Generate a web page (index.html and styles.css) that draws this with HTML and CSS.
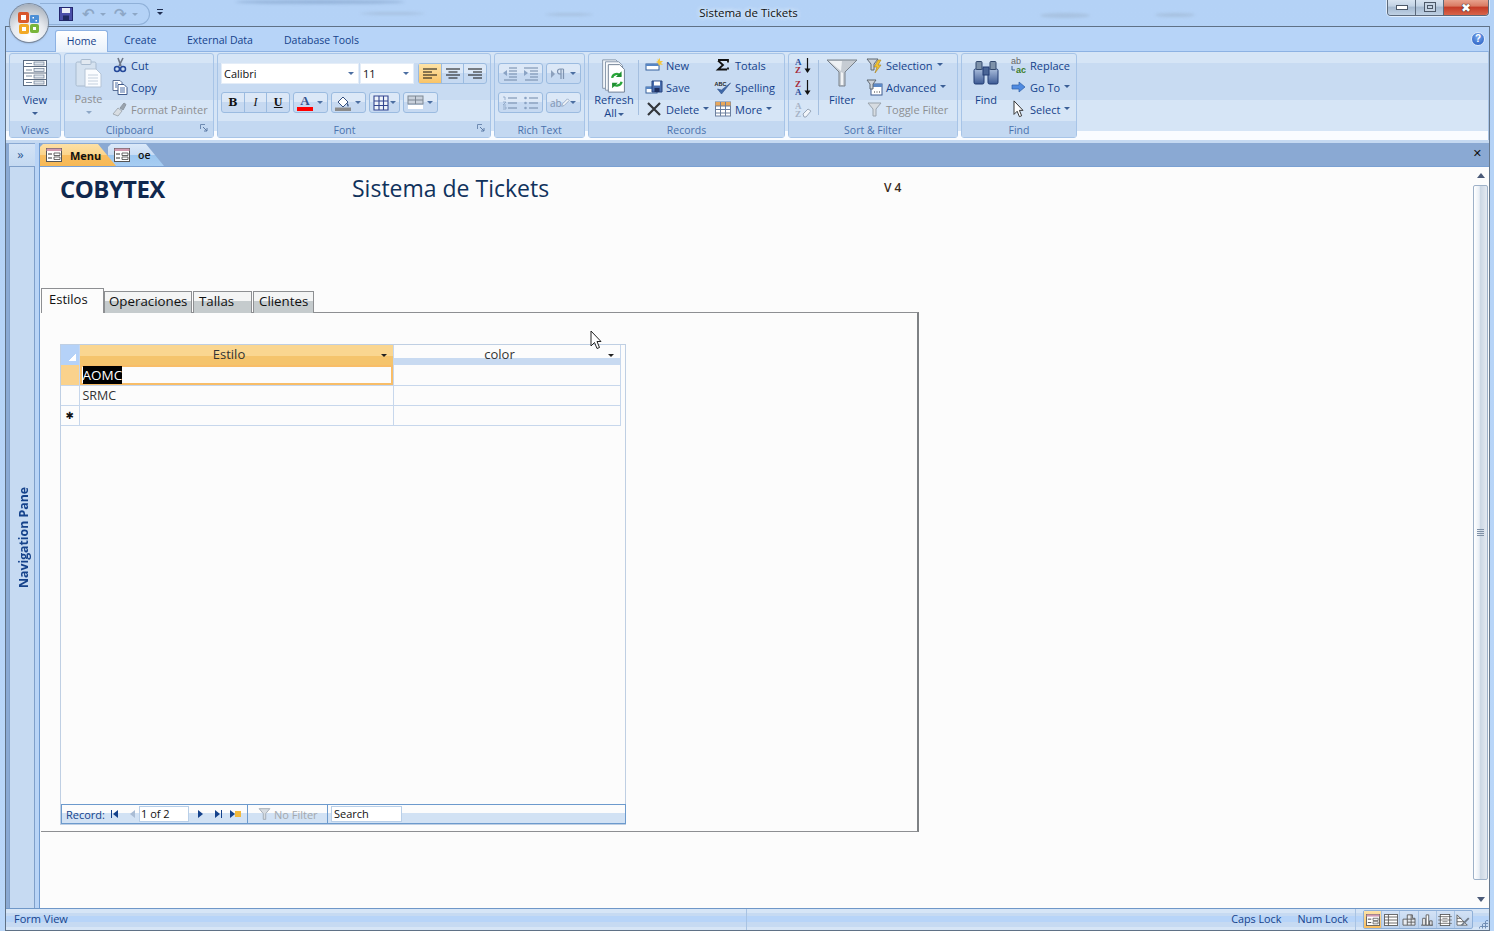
FILE: index.html
```html
<!DOCTYPE html>
<html lang="en">
<head>
    <meta charset="UTF-8">
    <title>Sistema de Tickets</title>
    <link rel="stylesheet" href="styles.css">
</head>
<body>

<svg class="defs" width="0" height="0">
    <defs>
        <linearGradient id="steel" x1="0" y1="0" x2="0" y2="1"><stop offset="0" stop-color="#a9bddc"/><stop offset="1" stop-color="#3d5a94"/></linearGradient>
        <symbol id="i-view" viewBox="0 0 26 28">
            <rect x="1.5" y="1.5" width="23" height="25" fill="#fff" stroke="#5a6a80"/>
            <path d="M1.5 7.5h23M1.5 14h23M1.5 20.500h23" stroke="#5a6a80"/>
            <path d="M4 4.500h6M4 11h6M4 17h6M4 23.500h6" stroke="#7b8ba0"/>
            <rect x="12" y="3" width="10" height="3" fill="#dfe6ee" stroke="#6a7a90" stroke-width=".7"/><rect x="12" y="9.500" width="10" height="3" fill="#dfe6ee" stroke="#6a7a90" stroke-width=".7"/><rect x="12" y="16" width="10" height="3" fill="#dfe6ee" stroke="#6a7a90" stroke-width=".7"/><rect x="12" y="22" width="10" height="3" fill="#dfe6ee" stroke="#6a7a90" stroke-width=".7"/>
        </symbol>
        <symbol id="i-paste" viewBox="0 0 28 30">
            <rect x="1" y="4" width="20" height="24" rx="1.500" fill="#d5e2f0" stroke="#a9bbcf"/>
            <rect x="6" y="1.500" width="10" height="5" rx="1" fill="#e2e9f1" stroke="#a9bbcf"/>
            <path d="M10 11h11l5 5v13H10z" fill="#fafcff" stroke="#b4c4d6"/>
            <path d="M13 17h10M13 20h10M13 23h10M13 26h10" stroke="#c4d0de"/>
        </symbol>
        <symbol id="i-cut" viewBox="0 0 16 16">
            <path d="M6 1l3 8M11 1L7 9" stroke="#6d7688" stroke-width="1.600" fill="none"/>
            <circle cx="5" cy="12" r="2.500" fill="none" stroke="#24489a" stroke-width="1.500"/><circle cx="11" cy="12" r="2.500" fill="none" stroke="#24489a" stroke-width="1.500"/>
        </symbol>
        <symbol id="i-copy" viewBox="0 0 16 16">
            <path d="M1 1.500h7l2 2v8H1z" fill="#fff" stroke="#5a6f96"/><path d="M6 5.500h6l3 3v7H6z" fill="#fff" stroke="#3f5a8c"/>
            <path d="M3 4h3M3 6h2M3 8h2M8 9h5M8 11h5M8 13h5" stroke="#4c6ea8"/>
        </symbol>
        <symbol id="i-painter" viewBox="0 0 16 16">
            <path d="M1 13l5-6 4 3-4 5z" fill="#d8dde2" stroke="#a4adb6"/><path d="M8 7l4-5 2 1.500-3 5.500z" fill="#9aa3ad" stroke="#8e98a2"/>
        </symbol>
        <symbol id="i-launcher" viewBox="0 0 9 9">
            <path d="M.5 5V.5H5" fill="none" stroke="#6e8bb2"/><path d="M3 3l4 4M7 4v3H4" fill="none" stroke="#5d7ba5"/>
        </symbol>
        <symbol id="i-left" viewBox="0 0 16 14"><path d="M1 2h14M1 5h9M1 8h14M1 11h9" stroke="#111" stroke-width="1.200"/></symbol>
        <symbol id="i-center" viewBox="0 0 16 14"><path d="M1 2h14M3.500 5h9M1 8h14M3.500 11h9" stroke="#111" stroke-width="1.200"/></symbol>
        <symbol id="i-right" viewBox="0 0 16 14"><path d="M1 2h14M6 5h9M1 8h14M6 11h9" stroke="#111" stroke-width="1.200"/></symbol>
        <symbol id="i-grid" viewBox="0 0 16 16"><path d="M1 1h14v14H1zM1 6h14M1 10.500h14M6 1v14M10.500 1v14" fill="#eef3fa" stroke="#33458f" stroke-width="1.100"/></symbol>
        <symbol id="i-alt" viewBox="0 0 17 15"><rect x="1" y="1" width="15" height="8" fill="#c9d1dc" stroke="#7d8794"/><path d="M1 5h15M8.500 1v8" stroke="#7d8794"/><rect x="1" y="10" width="15" height="4" fill="#fff"/></symbol>
        <symbol id="i-fill" viewBox="0 0 16 16"><path d="M3 7l5-5 5 5-5 5z" fill="#fff" stroke="#36507f"/><path d="M12 8c2 1 2 3 1 4-1-1-1-3-1-4z" fill="#36507f"/><rect x="0" y="12.500" width="16" height="3.500" fill="#8b8b8b"/></symbol>
        <symbol id="i-indent-l" viewBox="0 0 16 14"><path d="M7 1h8M7 4h8M7 7h8M7 10h8M2 13h13" stroke="#7188a8"/><path d="M5 3L1 6l4 3z" fill="#8aa3c4"/></symbol>
        <symbol id="i-indent-r" viewBox="0 0 16 14"><path d="M1 1h14M7 4h8M7 7h8M7 10h8M2 13h13" stroke="#7188a8"/><path d="M1 3l4 3-4 3z" fill="#8aa3c4"/></symbol>
        <symbol id="i-num" viewBox="0 0 16 14"><path d="M6 2h9M6 7h9M6 12h9" stroke="#7188a8"/><path d="M1 1h2v3M1 6h3l-3 3h3M1 11h3v2H1" fill="none" stroke="#8aa3c4" stroke-width=".8"/></symbol>
        <symbol id="i-bullet" viewBox="0 0 16 14"><path d="M6 2h9M6 7h9M6 12h9" stroke="#7188a8"/><circle cx="2.500" cy="2" r="1.300" fill="#8aa3c4"/><circle cx="2.500" cy="7" r="1.300" fill="#8aa3c4"/><circle cx="2.500" cy="12" r="1.300" fill="#8aa3c4"/></symbol>
        <symbol id="i-para" viewBox="0 0 16 14"><path d="M1 3l4 4-4 4z" fill="#8da1bd"/><path d="M11 2v10M13.500 2v10M13.500 2H10a2.500 2.500 0 000 5h1" fill="none" stroke="#7f93b0" stroke-width="1.200"/></symbol>
        <symbol id="i-refresh" viewBox="0 0 26 38">
            <path d="M1 2h14l4 4v26H1z" fill="#f4f7fb" stroke="#8494a8"/><path d="M4 4h14l4 4v26H4z" fill="#f8fafc" stroke="#8494a8"/><path d="M7 7h12l5 5v24H7z" fill="#fff" stroke="#6d7d92"/>
            <path d="M11 21a5 5 0 019-2M21 25a5 5 0 01-9 2" fill="none" stroke="#2aa63a" stroke-width="2.400"/><path d="M21 14v6h-6zM11 32v-6h6z" fill="#1f8f30"/>
        </symbol>
        <symbol id="i-new" viewBox="0 0 18 16"><rect x="1" y="7" width="13" height="6" fill="#fff" stroke="#35609c"/><rect x="1" y="7" width="13" height="2" fill="#5786c4"/><path d="M12 1l1 2 2-2 0 3 3 0-2 2 2 2-3-.5-1 1.500-1-3-2-1 2-1z" fill="#f4c640"/></symbol>
        <symbol id="i-save" viewBox="0 0 18 16"><rect x="1" y="8" width="11" height="6" fill="#fff" stroke="#35609c"/><rect x="1" y="8" width="11" height="2" fill="#5786c4"/><path d="M7 2h10v11H7z" fill="#4a6fb0" stroke="#27457f"/><rect x="9" y="2.500" width="6" height="4" fill="#fff"/><rect x="9.500" y="9" width="5" height="4" fill="#1e2f5f"/></symbol>
        <symbol id="i-delete" viewBox="0 0 16 16"><path d="M2 2l12 12M14 2L2 14" stroke="#33363b" stroke-width="2.200"/></symbol>
        <symbol id="i-sigma" viewBox="0 0 14 12"><path d="M2 1h10v2.500M11 10.500H2l5-4.500-5-4.500M12 8.500v2" fill="none" stroke="#111" stroke-width="1.800"/></symbol>
        <symbol id="i-spell" viewBox="0 0 17 17"><text x="0" y="6.500" class="tiny-svg">ABC</text><path d="M3 10l4 5 9-11-9 7z" fill="#3f68a8" stroke="#2f528c" stroke-width=".6"/></symbol>
        <symbol id="i-more" viewBox="0 0 17 16"><rect x="1" y="1" width="15" height="14" fill="#fff" stroke="#6b7f9e"/><rect x="1" y="1" width="15" height="4" fill="#e8a75a"/><path d="M1 5h15M1 8.500h15M1 12h15M6 1v14M11 1v14" stroke="#6b7f9e"/></symbol>
        <symbol id="i-az" viewBox="0 0 17 17"><text x="0" y="7.500" class="letter-blue">A</text><text x="0" y="16" class="letter-red">Z</text><path d="M12.500 1v14" stroke="#111" stroke-width="1.200"/><path d="M9.500 11.500h6l-3 4.500z" fill="#111"/></symbol>
        <symbol id="i-za" viewBox="0 0 17 17"><text x="0" y="7.500" class="letter-red">Z</text><text x="0" y="16" class="letter-blue">A</text><path d="M12.500 1v14" stroke="#111" stroke-width="1.200"/><path d="M9.500 11.500h6l-3 4.500z" fill="#111"/></symbol>
        <symbol id="i-sortclear" viewBox="0 0 17 17"><text x="0" y="7.500" class="letter-mute">A</text><text x="0" y="16" class="letter-mute">Z</text><path d="M8 13l5-5 3 2-5 6H9z" fill="#f2f5f9" stroke="#98a6b8"/></symbol>
        <symbol id="i-funnel" viewBox="0 0 32 28"><path d="M1 1h30L19 13v14h-6V13z" fill="#c6ccd3" stroke="#78818b"/><path d="M3 2h13l-1 10z" fill="#eef1f4"/><path d="M17 14v12h-2V13z" fill="#f1f3f5"/></symbol>
        <symbol id="i-selection" viewBox="0 0 17 17"><path d="M1 2h11L8 7v6H5V7z" fill="#cdd3da" stroke="#5e6873"/><path d="M12 3l3 0-3 5 3 0-6 8 2-6H8z" fill="#f2c230" stroke="#a9801c" stroke-width=".6"/></symbol>
        <symbol id="i-advanced" viewBox="0 0 17 17"><rect x="5" y="5" width="11" height="11" fill="#fff" stroke="#3f5d90"/><rect x="5" y="5" width="11" height="3" fill="#5c89c6"/><path d="M8 13h1M10.500 13h1M13 13h1" stroke="#333"/><path d="M1 1h9L7 5v5H4V5z" fill="#cdd3da" stroke="#5e6873"/></symbol>
        <symbol id="i-toggle" viewBox="0 0 17 17"><path d="M2 2h13l-5 6v7H7V8z" fill="#d7dce1" stroke="#9aa4ae"/></symbol>
        <symbol id="i-binoc" viewBox="0 0 30 26">
            <rect x="3" y="9" width="10" height="15" rx="1.500" fill="url(#steel)" stroke="#223d72"/><rect x="17" y="9" width="10" height="15" rx="1.500" fill="url(#steel)" stroke="#223d72"/>
            <rect x="5" y="1.500" width="6" height="8" rx="1" fill="#7d91a9" stroke="#33496e"/><rect x="19" y="1.500" width="6" height="8" rx="1" fill="#7d91a9" stroke="#33496e"/>
            <rect x="12" y="7" width="6" height="8" fill="#4a6596" stroke="#223d72"/>
        </symbol>
        <symbol id="i-replace" viewBox="0 0 17 17"><text x="1" y="7" class="ab-grey">ab</text><text x="6" y="15.500" class="ab-green">ac</text><path d="M2 9v4h3" fill="none" stroke="#3a5f95"/></symbol>
        <symbol id="i-goto" viewBox="0 0 15 12"><path d="M1 4h7V1l6 5-6 5V8H1z" fill="#4f8ae0" stroke="#2e5ea8" stroke-width=".7"/></symbol>
        <symbol id="i-arrow" viewBox="0 0 12 20"><path d="M1 1v15l3.500-3.500 2.500 6 2.500-1-2.500-6H11z" fill="#fff" stroke="#222"/></symbol>
        <symbol id="i-pencil" viewBox="0 0 12 12"><path d="M2 10l1-3 6-6 2 2-6 6z" fill="#f2f5f9" stroke="#8ea2bf"/></symbol>
        <symbol id="i-form" viewBox="0 0 16 14"><rect x=".5" y=".5" width="15" height="13" fill="#fff" stroke="#555"/><rect x=".5" y=".5" width="15" height="2.500" fill="#d29ab0"/><path d="M2 6h4M2 10h4" stroke="#333"/><path d="M8 5h6v2.500H8zM8 9h6v2.500H8z" fill="#fff" stroke="#444" stroke-width=".8"/></symbol>
        <symbol id="i-sheet" viewBox="0 0 16 14"><rect x=".5" y=".5" width="15" height="13" fill="#fff" stroke="#555"/><path d="M.5 3.500h15M.5 7h15M.5 10.500h15M5 .5v13" stroke="#555"/></symbol>
        <symbol id="i-pivot" viewBox="0 0 16 14"><path d="M6 1h6v4h3v8H1V6h5z" fill="#e8ecf2" stroke="#555"/><path d="M6 6h9M6 9.500h9M6 6v7M10.500 1v12" stroke="#555"/></symbol>
        <symbol id="i-chart" viewBox="0 0 16 14"><path d="M1 13h14" stroke="#555"/><path d="M3 5h3v8H3zM7 1h3v12H7z" fill="#fff" stroke="#555"/><path d="M11 8h3v5h-3z" fill="#dfe3ea" stroke="#555"/></symbol>
        <symbol id="i-layout" viewBox="0 0 16 14"><rect x="2.500" y=".5" width="11" height="13" fill="#fff" stroke="#555"/><path d="M0 3h16M0 7h16M0 11h16M5 5h6M5 9h6" stroke="#555" stroke-width=".8"/></symbol>
        <symbol id="i-design" viewBox="0 0 16 14"><path d="M1 1v12h12z" fill="#fff" stroke="#555"/><path d="M5 13l9-9 1.500 1.500-8 8z" fill="#6f7a88"/><path d="M1 5h5M1 9h8" stroke="#555"/></symbol>
    </defs>
</svg>

<div class="streak streak-a"></div>
<div class="streak streak-b"></div>
<div class="streak streak-c"></div>
<div class="streak streak-d"></div>
<div class="streak streak-e"></div>

<div class="orb">
    <svg width="24" height="24" viewBox="0 0 24 24">
        <rect x="1" y="1" width="11" height="11" rx="2" fill="#d9572b"/><rect x="4" y="4" width="5" height="5" fill="#fff"/>
        <rect x="13" y="4" width="9" height="8" rx="1" fill="#4d8fd6"/><rect x="15.500" y="6" width="1.500" height="1.500" fill="#fff"/><rect x="18.500" y="9" width="1.500" height="1.500" fill="#fff"/>
        <rect x="2" y="13" width="10" height="10" rx="2" fill="#f2a926"/><rect x="5" y="16" width="4" height="4" fill="#fff"/>
        <rect x="13" y="13" width="9" height="9" rx="2" fill="#79b53a"/><rect x="16" y="16" width="3" height="3" fill="#fff"/>
    </svg>
</div>

<div class="pointer"><svg width="12" height="20"><use href="#i-arrow"/></svg></div>

<header class="titlebar">
    <div class="qat">
        <svg class="qat-save" width="14" height="14" viewBox="0 0 14 14"><rect x=".5" y=".5" width="13" height="13" fill="#4a4fa8" stroke="#23276e"/><rect x="3" y="1" width="8" height="5" fill="#e9edf6"/><rect x="4" y="8.500" width="6" height="5" fill="#1f2a60"/></svg>
        <span class="qat-ghost">&#8630;</span><span class="caret caret-mute"></span>
        <span class="qat-ghost qat-redo">&#8631;</span><span class="caret caret-mute"></span>
    </div>
    <div class="qat-more"><span class="qat-bar"></span><span class="caret caret-dark"></span></div>
    <div class="title">Sistema de Tickets</div>
    <div class="winbtns">
        <div class="winbtn"><span class="glyph-min"></span></div>
        <div class="winbtn"><span class="glyph-max"></span></div>
        <div class="winbtn winbtn-close">&#10006;</div>
    </div>
</header>

<div class="frame">
    <nav class="tabrow">
        <div class="rtab rtab-on">Home</div>
        <div class="rtab rtab-create">Create</div>
        <div class="rtab rtab-external">External Data</div>
        <div class="rtab">Database Tools</div>
        <div class="help">?</div>
    </nav>

    <div class="ribbon">
        <section class="group g-views">
            <div class="group-body">
                <div class="bigbtn btn-view"><svg width="26" height="28"><use href="#i-view"/></svg><span>View</span><span class="caret"></span></div>
            </div>
            <div class="group-label">Views</div>
        </section>

        <section class="group g-clip">
            <div class="group-body">
                <div class="bigbtn btn-paste muted"><svg width="28" height="30"><use href="#i-paste"/></svg><span>Paste</span><span class="caret caret-mute"></span></div>
                <div class="col">
                    <div class="row"><svg width="16" height="16"><use href="#i-cut"/></svg>Cut</div>
                    <div class="row"><svg width="16" height="16"><use href="#i-copy"/></svg>Copy</div>
                    <div class="row muted"><svg width="16" height="16"><use href="#i-painter"/></svg>Format Painter</div>
                </div>
            </div>
            <div class="group-label label-launch">Clipboard<svg class="launcher" width="9" height="9"><use href="#i-launcher"/></svg></div>
        </section>

        <section class="group g-font">
            <div class="group-body font-body">
                <div class="font-line">
                    <div class="combo combo-font">Calibri<span class="caret caret-steel"></span></div>
                    <div class="combo combo-size">11<span class="caret caret-steel"></span></div>
                    <div class="btns align-btns">
                        <div class="tool tool-on"><svg width="16" height="14"><use href="#i-left"/></svg></div>
                        <div class="tool"><svg width="16" height="14"><use href="#i-center"/></svg></div>
                        <div class="tool"><svg width="16" height="14"><use href="#i-right"/></svg></div>
                    </div>
                </div>
                <div class="font-line font-line-2">
                    <div class="btns biu">
                        <div class="tool tool-fmt fmt-b">B</div>
                        <div class="tool tool-fmt fmt-i">I</div>
                        <div class="tool tool-fmt fmt-u">U</div>
                    </div>
                    <div class="btns w-35"><div class="color-a">A<i></i></div><span class="caret caret-steel"></span></div>
                    <div class="btns w-35"><svg width="16" height="16"><use href="#i-fill"/></svg><span class="caret caret-steel"></span></div>
                    <div class="btns w-31"><svg width="16" height="16"><use href="#i-grid"/></svg><span class="caret caret-steel"></span></div>
                    <div class="btns w-35"><svg width="17" height="15"><use href="#i-alt"/></svg><span class="caret caret-steel"></span></div>
                </div>
            </div>
            <div class="group-label label-launch">Font<svg class="launcher" width="9" height="9"><use href="#i-launcher"/></svg></div>
        </section>

        <section class="group g-rich">
            <div class="group-body font-body">
                <div class="font-line">
                    <div class="btns w-45"><svg width="16" height="14"><use href="#i-indent-l"/></svg><svg width="16" height="14"><use href="#i-indent-r"/></svg></div>
                    <div class="btns w-35"><svg width="16" height="14"><use href="#i-para"/></svg><span class="caret caret-steel"></span></div>
                </div>
                <div class="font-line font-line-2">
                    <div class="btns w-45"><svg width="16" height="14"><use href="#i-num"/></svg><svg width="16" height="14"><use href="#i-bullet"/></svg></div>
                    <div class="btns w-35"><span class="ab-mark">ab</span><svg class="ab-pencil" width="10" height="10"><use href="#i-pencil"/></svg><span class="caret caret-steel"></span></div>
                </div>
            </div>
            <div class="group-label">Rich Text</div>
        </section>

        <section class="group g-records">
            <div class="group-body">
                <div class="bigbtn btn-refresh"><svg width="26" height="38"><use href="#i-refresh"/></svg><span>Refresh</span><span>All<span class="caret caret-inline"></span></span></div>
                <div class="vsep"></div>
                <div class="col col-records">
                    <div class="row"><svg width="18" height="16"><use href="#i-new"/></svg>New</div>
                    <div class="row"><svg width="18" height="16"><use href="#i-save"/></svg>Save</div>
                    <div class="row"><svg width="18" height="16"><use href="#i-delete"/></svg>Delete<span class="caret caret-inline"></span></div>
                </div>
                <div class="col">
                    <div class="row"><svg width="18" height="12"><use href="#i-sigma"/></svg>Totals</div>
                    <div class="row"><svg width="18" height="17"><use href="#i-spell"/></svg>Spelling</div>
                    <div class="row"><svg width="18" height="16"><use href="#i-more"/></svg>More<span class="caret caret-inline"></span></div>
                </div>
            </div>
            <div class="group-label">Records</div>
        </section>

        <section class="group g-sort">
            <div class="group-body">
                <div class="col col-sort">
                    <div class="row"><svg width="17" height="17"><use href="#i-az"/></svg></div>
                    <div class="row"><svg width="17" height="17"><use href="#i-za"/></svg></div>
                    <div class="row"><svg width="17" height="17"><use href="#i-sortclear"/></svg></div>
                </div>
                <div class="vsep"></div>
                <div class="bigbtn btn-filter"><svg width="32" height="28"><use href="#i-funnel"/></svg><span>Filter</span></div>
                <div class="col">
                    <div class="row"><svg width="17" height="17"><use href="#i-selection"/></svg>Selection<span class="caret caret-inline"></span></div>
                    <div class="row"><svg width="17" height="17"><use href="#i-advanced"/></svg>Advanced<span class="caret caret-inline"></span></div>
                    <div class="row muted"><svg width="17" height="17"><use href="#i-toggle"/></svg>Toggle Filter</div>
                </div>
            </div>
            <div class="group-label">Sort &amp; Filter</div>
        </section>

        <section class="group g-find">
            <div class="group-body">
                <div class="bigbtn btn-find"><svg width="30" height="26"><use href="#i-binoc"/></svg><span>Find</span></div>
                <div class="col">
                    <div class="row"><svg width="17" height="17"><use href="#i-replace"/></svg>Replace</div>
                    <div class="row"><svg width="17" height="12"><use href="#i-goto"/></svg>Go To<span class="caret caret-inline"></span></div>
                    <div class="row"><svg width="17" height="18" viewBox="-3 0 18 20"><use href="#i-arrow" width="12" height="20"/></svg>Select<span class="caret caret-inline"></span></div>
                </div>
            </div>
            <div class="group-label">Find</div>
        </section>
    </div>

    <div class="band"></div>

    <div class="workspace">
        <aside class="navpane">
            <div class="nav-toggle">&raquo;</div>
            <div class="nav-strip"><span class="nav-text">Navigation Pane</span></div>
        </aside>

        <main class="doc">
            <div class="docbar">
                <div class="doctab doctab-on"><svg width="16" height="14"><use href="#i-form"/></svg><b>Menu</b></div>
                <div class="doctab doctab-off"><svg width="16" height="14"><use href="#i-form"/></svg><span>oe</span></div>
                <div class="doc-close">&#10005;</div>
            </div>

            <div class="doc-area">
                <div class="form">
                    <div class="form-head">
                        <div class="brand">COBYTEX</div>
                        <div class="app-name">Sistema de Tickets</div>
                        <div class="version">V 4</div>
                    </div>

                    <div class="ftabs">
                        <div class="ftab ftab-on">Estilos</div>
                        <div class="ftab ftab-oper">Operaciones</div>
                        <div class="ftab ftab-tallas">Tallas</div>
                        <div class="ftab ftab-clientes">Clientes</div>
                    </div>

                    <div class="fpanel">
                        <div class="subform">
                            <table class="sheet">
                                <thead>
                                    <tr>
                                        <th class="corner"></th>
                                        <th class="col-estilo th-on">Estilo<span class="th-caret"></span></th>
                                        <th class="col-color">color<span class="th-caret"></span></th>
                                    </tr>
                                </thead>
                                <tbody>
                                    <tr>
                                        <td class="sel sel-on"></td>
                                        <td class="cell-on"><span class="picked">AOMC</span></td>
                                        <td></td>
                                    </tr>
                                    <tr>
                                        <td class="sel"></td>
                                        <td>SRMC</td>
                                        <td></td>
                                    </tr>
                                    <tr>
                                        <td class="sel star">&#10033;</td>
                                        <td></td>
                                        <td></td>
                                    </tr>
                                </tbody>
                            </table>

                            <div class="recnav">
                                <span class="rec-label">Record:</span>
                                <span class="rec-btn rb-first"></span>
                                <span class="rec-btn rb-prev"></span>
                                <div class="rec-input">1 of 2</div>
                                <span class="rec-btn rb-next"></span>
                                <span class="rec-btn rb-last"></span>
                                <span class="rec-btn rb-new"></span>
                                <div class="rec-sep rec-sep-a"></div>
                                <svg class="rec-funnel" width="15" height="14"><use href="#i-toggle"/></svg>
                                <span class="rec-nofilter">No Filter</span>
                                <div class="rec-sep"></div>
                                <div class="rec-search">Search</div>
                            </div>
                        </div>
                    </div>
                </div>

                <div class="scrollbar">
                    <span class="arrow-up"></span>
                    <div class="thumb"><span class="grip"></span></div>
                    <span class="arrow-down"></span>
                </div>
            </div>
        </main>
    </div>

    <footer class="status">
        <div class="status-left">Form View</div>
        <div class="status-keys"><span>Caps Lock</span><span>Num Lock</span></div>
        <div class="viewbtns">
            <div class="vbtn vbtn-on"><svg width="14" height="12"><use href="#i-form"/></svg></div>
            <div class="vbtn"><svg width="14" height="12"><use href="#i-sheet"/></svg></div>
            <div class="vbtn"><svg width="14" height="12"><use href="#i-pivot"/></svg></div>
            <div class="vbtn"><svg width="14" height="12"><use href="#i-chart"/></svg></div>
            <div class="vbtn"><svg width="14" height="12"><use href="#i-layout"/></svg></div>
            <div class="vbtn"><svg width="14" height="12"><use href="#i-design"/></svg></div>
        </div>
        <div class="sizegrip"></div>
    </footer>
</div>

</body>
</html>
```

FILE: styles.css
```css
* { box-sizing: border-box; }
html, body { margin: 0; height: 931px; overflow: hidden; }
body {
    position: relative;
    font-family: "Open Sans", "Noto Sans", sans-serif;
    font-size: 11px;
    color: #15428b;
    background: linear-gradient(180deg, #b4d2f6 0, #bad7f9 100%);
    display: flex;
    flex-direction: column;
}
.defs { position: absolute; }
svg { display: block; flex: none; }

.tiny-svg { font: bold 5.5px "Liberation Sans", sans-serif; fill: #222; }
.letter-blue { font: bold 9px "Liberation Serif", serif; fill: #2a4d9a; }
.letter-red { font: bold 9px "Liberation Serif", serif; fill: #a52a3a; }
.letter-mute { font: bold 9px "Liberation Serif", serif; fill: #a6b3c6; }
.ab-grey { font: 9px "Liberation Sans", sans-serif; fill: #666; }
.ab-green { font: bold 9px "Liberation Sans", sans-serif; fill: #3b7d28; }

/* glass streaks behind the title bar */
.streak { position: absolute; height: 5px; border-radius: 50%; background: #a3bcd9; filter: blur(1.5px); opacity: .75; }
.streak-a { left: 235px; top: 0; width: 170px; height: 4px; background: #8aa9d0; }
.streak-b { left: 360px; top: 12px; width: 65px; height: 3px; }
.streak-c { left: 545px; top: 13px; width: 48px; height: 3px; }
.streak-d { left: 1040px; top: 13px; width: 50px; }
.streak-e { left: 1155px; top: 13px; width: 40px; height: 4px; }

/* title bar */
.titlebar { position: relative; height: 26px; flex: none; display: flex; align-items: flex-start; }
.qat {
    position: absolute; left: 40px; top: 3px; width: 110px; height: 22px;
    border: 1px solid #8fb0d8; border-left: 0; border-radius: 0 11px 11px 0;
    display: flex; align-items: center; padding-left: 19px;
}
.qat-ghost { font-size: 15px; color: #8da7c6; width: 14px; margin-left: 9px; line-height: 1; font-family: "DejaVu Sans", sans-serif; font-weight: bold; }
.qat-redo { margin-left: 8px; }
.qat .caret { margin-left: 4px; }
.qat-more { position: absolute; left: 156px; top: 9px; display: flex; flex-direction: column; gap: 2px; align-items: center; width: 7px; }
.qat-bar { width: 6px; height: 1px; background: #1f2d50; }
.title {
    width: 100%; text-align: center; padding: 5px 0 0 3px;
    font-size: 11.5px; color: #111;
    text-shadow: 0 0 5px #e9f3ff, 0 0 5px #e9f3ff;
}
.winbtns {
    position: absolute; right: 5px; top: -1px; height: 17px; display: flex;
    border: 1px solid #5c6a7c; border-top: 0; border-radius: 0 0 4px 4px; overflow: hidden;
    box-shadow: 0 0 0 1px rgba(255,255,255,.6);
}
.winbtn { width: 28px; display: flex; align-items: center; justify-content: center; background: linear-gradient(180deg, #dbe6f2 0, #c2d2e4 45%, #a4b8cf 50%, #bfd1e4 100%); border-right: 1px solid #5c6a7c; }
.winbtn-close { width: 44px; border-right: 0; color: #fff; font-size: 12px; text-shadow: 0 0 1px #222, 0 0 1px #222; background: linear-gradient(180deg, #eaa894 0, #d97a62 45%, #c43a26 50%, #d8644a 100%); }
.glyph-min { width: 12px; height: 5px; background: #fff; border: 1px solid #4c5868; }
.glyph-max { width: 12px; height: 10px; background: #c6d4e4; border: 1px solid #4c5868; box-shadow: inset 0 0 0 2px #c6d4e4, inset 0 0 0 3px #4c5868; }

/* orb */
.orb {
    position: absolute; left: 10px; top: 4px; width: 38px; height: 38px; border-radius: 50%; z-index: 3;
    display: flex; align-items: center; justify-content: center;
    background: radial-gradient(circle at 50% 85%, #fff 0, #e6e9ee 45%, #b9c0c9 75%, #8c98a8 100%);
    box-shadow: 0 0 0 1px #7d8a9b, 0 1px 2px rgba(40,60,90,.5);
}

.pointer { position: absolute; left: 590px; top: 330px; z-index: 5; }

/* window frame */
.frame {
    flex: 1; margin: 0 4px 0 5px; min-height: 0;
    border: 1px solid #5f7186; border-right-color: #66788d;
    display: flex; flex-direction: column;
    background: #b7d4f8;
}

/* ribbon tabs */
.tabrow { height: 24px; flex: none; display: flex; align-items: flex-end; padding-left: 49px; position: relative; }
.rtab { padding: 0 12px; font-size: 10.5px; height: 21px; line-height: 20px; color: #15428b; white-space: nowrap; }
.rtab-on {
    width: 53px; padding: 0; text-align: center; line-height: 20px; height: 22px;
    background: linear-gradient(180deg, #fff, #e8f1fb); border: 1px solid #8db2e3; border-bottom: 0; border-radius: 3px 3px 0 0;
    margin-right: 4px; position: relative; top: 1px;
}
.rtab-create { width: 68px; }
.rtab-external { padding: 0 0 0 11px; width: 96px; margin-left: -4px; }
.help {
    position: absolute; right: 4px; top: 5px; width: 14px; height: 14px; border-radius: 50%;
    background: radial-gradient(circle at 50% 35%, #7aa8ee, #1d56bd); border: 1px solid #dbe8f8;
    color: #fff; font: bold 10px/12px "Liberation Sans", sans-serif; text-align: center;
}

/* ribbon */
.ribbon {
    height: 89px; flex: none; padding: 1px 3px 0 3px; display: flex; gap: 3px;
    border-top: 1px solid #8db2e3; border-right: 1px solid #a9c4e6;
    background: linear-gradient(180deg, #d6e5f6 0, #d6e5f6 11px, #c8dbf2 11px, #c8dbf2 48px, #d6e5f6 48px, #d6e5f6 79px, #fafcff 79px, #fafcff 100%);
}
.group { height: 85px; border: 1px solid #a7c4e7; border-radius: 3px; display: flex; flex-direction: column; background: linear-gradient(180deg, #d6e5f6 0, #d6e5f6 9px, #c8dbf2 9px, #c8dbf2 46px, #d6e5f6 46px); flex: none; }
.group-body { height: 67px; display: flex; flex: none; }
.group-label { height: 16px; flex: none; text-align: center; line-height: 19px; color: #4a72ad; background: #c3d8f1; position: relative; font-size: 10.5px; }
.label-launch { padding-right: 19px; }
.launcher { position: absolute; right: 4px; top: 3px; }
.g-views { width: 52px; }
.g-clip { width: 150px; }
.g-font { width: 274px; }
.g-rich { width: 91px; }
.g-records { width: 197px; }
.g-sort { width: 170px; }
.g-find { width: 116px; }

.muted, .muted span { color: #8d8f92; }
.bigbtn { display: flex; flex-direction: column; align-items: center; flex: none; }
.bigbtn span { line-height: 13px; }
.btn-view { width: 50px; padding-top: 5px; }
.btn-view span:first-of-type { margin-top: 6px; }
.btn-view .caret, .btn-paste .caret { margin-top: 6px; }
.btn-paste { width: 47px; padding: 4px 0 0 0; }
.btn-paste span:first-of-type { margin-top: 4px; }
.btn-refresh { width: 49px; padding: 4px 0 0 1px; }
.btn-refresh svg { height: 36px; margin-bottom: -1px; }
.btn-filter { width: 34px; margin: 0 7px 0 6px; padding-top: 5px; }
.btn-filter span { margin-top: 6px; }
.btn-find { width: 40px; margin: 0 4px 0 4px; padding-top: 6px; }
.btn-find span { margin-top: 7px; }

.col { display: flex; flex-direction: column; flex: none; }
.row { height: 22px; display: flex; align-items: center; gap: 3px; white-space: nowrap; }
.col-records { width: 69px; margin-left: 6px; }
.col-sort { width: 16px; margin: 0 7px 0 6px; }
.vsep { width: 1px; height: 55px; margin-top: 6px; background: #a5bfdf; flex: none; }

/* small dropdown arrows */
.caret { display: inline-block; width: 0; height: 0; border: 3px solid transparent; border-top: 3px solid #3b5f96; border-bottom: 0; flex: none; }
.caret-mute { border-top-color: #8da7c6; }
.caret-dark { border-top-color: #1f2d50; }
.caret-steel { border-top-color: #4c6fa2; }
.caret-inline { margin-left: 1px; position: relative; top: -1px; }

/* font group */
.font-body { flex-direction: column; padding: 9px 0 0 3px; gap: 8px; }
.font-line { display: flex; height: 21px; align-items: stretch; }
.font-line-2 { gap: 3px; }
.combo { background: #fff; border: 1px solid #e4edf8; position: relative; color: #111; line-height: 19px; padding-left: 2px; }
.combo .caret { position: absolute; right: 4px; top: 8px; }
.combo-font { width: 138px; }
.combo-size { width: 54px; margin-left: 1px; }
.btns { display: flex; border: 1px solid #9bbbe0; border-radius: 3px; align-items: center; background: linear-gradient(180deg, #dce8f7 50%, #c6d9f1 50%); }
.align-btns { width: 69px; margin-left: 4px; }
.biu { width: 69px; }
.tool { flex: 1; height: 100%; display: flex; align-items: center; justify-content: center; border-right: 1px solid #9bbbe0; color: #111; }
.tool:last-child { border-right: 0; }
.tool-on { background: linear-gradient(180deg, #fde3a8, #f9c468); }
.tool-fmt { font: bold 12px "Liberation Serif", serif; }
.fmt-b { font-family: "DejaVu Serif", serif; font-size: 11px; }
.fmt-i { font-style: italic; font-weight: normal; }
.fmt-u { text-decoration: underline; }
.w-35 { width: 35px; padding: 0 4px 0 3px; justify-content: space-between; }
.w-31 { width: 31px; padding: 0 3px; justify-content: space-between; }
.w-45 { width: 45px; justify-content: space-around; margin-right: 3px; }
.font-line-2 .w-45 { margin-right: 0; }
.color-a { width: 16px; text-align: center; font: bold 13px/13px "Liberation Serif", serif; color: #34548f; display: flex; flex-direction: column; align-items: center; }
.color-a i { width: 16px; height: 4px; background: #f00; }
.ab-mark { font-size: 10px; color: #7f93b0; }
.ab-pencil { margin-left: -2px; }

/* band between ribbon and documents */
.band { height: 3px; flex: none; background: #c5d9f1; }

.workspace { flex: 1; display: flex; min-height: 0; }
.navpane { width: 33px; flex: none; display: flex; flex-direction: column; background: #8aa9d3; padding-left: 3px; border-right: 4px solid #b9d4f6; }
.nav-toggle { height: 23px; margin-top: 1px; padding-right: 3px; background: linear-gradient(180deg, #d3e3f6, #c4d9f1); text-align: center; font-size: 13px; line-height: 20px; color: #2f5893; border-bottom: 1px solid #7f9fc9; }
.nav-strip { flex: 1; background: #c6daf2; display: flex; align-items: center; justify-content: center; padding-left: 2px; border-left: 1px solid #7f9fc9; border-right: 1px solid #7f9fc9; }
.nav-text { writing-mode: vertical-rl; transform: rotate(180deg); font-weight: bold; font-size: 12.3px; color: #15428b; }

.doc { flex: 1; display: flex; flex-direction: column; min-width: 0; border-left: 1px solid #6f9ad0; }
.docbar { height: 24px; flex: none; background: #8aa9d3; display: flex; align-items: flex-end; position: relative; border-bottom: 1px solid #7aa0d2; }
.doctab { height: 22px; display: flex; align-items: center; color: #111; padding-left: 6px; gap: 8px; }
.doctab-on { width: 76px; background: linear-gradient(180deg, #fde0a4 0, #fbd48b 50%, #f8bd5f 50%, #f7b956 100%); clip-path: polygon(0 100%, 0 3px, 3px 0, 58px 0, 76px 100%); z-index: 2; position: relative; }
.doctab-on b { font-size: 11px; }
.doctab-off { width: 56px; margin-left: -8px; background: linear-gradient(180deg, #dbe9f9 0, #c8dcf4 50%, #9cc6ef 50%, #a7cdf2 100%); clip-path: polygon(0 100%, 0 3px, 3px 0, 38px 0, 56px 100%); }
.doctab-off span { font-weight: 600; font-size: 10.5px; }
.doc-close { position: absolute; right: 7px; top: 4px; color: #111; font-size: 11px; font-weight: bold; font-family: "DejaVu Sans", sans-serif; }

.doc-area { flex: 1; display: flex; background: #fcfcfc; min-height: 0; }
.form { flex: 1; padding-left: 1px; display: flex; flex-direction: column; }
.form-head { height: 121px; flex: none; display: flex; align-items: flex-start; padding: 6px 0 0 19px; }
.brand { width: 292px; font: bold 24px/31px "Open Sans", sans-serif; letter-spacing: -.6px; color: #10284e; }
.app-name { width: 532px; font-size: 23px; line-height: 31px; color: #10325c; }
.version { font-size: 12px; line-height: 13px; padding-top: 8px; color: #3a2a1a; font-weight: 600; }

/* form tabs */
.ftabs { height: 25px; flex: none; display: flex; align-items: flex-end; position: relative; z-index: 1; margin-bottom: -1px; }
.ftab { height: 22px; font-size: 13.3px; color: #111; padding-left: 4px; line-height: 19px; border: 1px solid #8d8f92; border-bottom: 0; background: linear-gradient(180deg, #f4f5f5 0, #f4f5f5 45%, #c5cbcd 45%, #c5cbcd 100%); margin-right: 1px; white-space: nowrap; }
.ftab-on { width: 63px; height: 25px; font-size: 13px; background: #fcfcfc; padding-left: 7px; line-height: 21px; margin-right: 0; }
.ftab-oper { width: 88px; }
.ftab-tallas { width: 59px; padding-left: 5px; }
.ftab-clientes { width: 61px; padding-left: 5px; margin-right: 0; }
.fpanel { width: 878px; height: 520px; flex: none; border-top: 1px solid #8d8f92; border-right: 2px solid #7e8184; border-bottom: 1px solid #8d8f92; padding: 31px 0 0 19px; }

/* subform */
.subform { width: 566px; height: 481px; border: 1px solid #bfcfe3; display: flex; flex-direction: column; background: #fcfcfc; }
.sheet { width: 559px; border-collapse: collapse; table-layout: fixed; font-size: 12.5px; color: #333; }
.sheet th, .sheet td { height: 20px; padding: 0 0 0 3px; border: 1px solid #c7d7ec; border-top: 0; border-left: 0; font-weight: normal; white-space: nowrap; }
.sheet th { text-align: center; font-size: 13px; padding: 0 14px 2px 0; position: relative; border-bottom: 0; color: #333; line-height: 16px; }
.corner { width: 18px; background: linear-gradient(135deg, #b5d2f8 62%, #fff 63%, #fff 100%); background-size: 10px 10px; background-repeat: no-repeat; background-position: 5px 6px; background-color: #b5d2f8; }
.col-estilo { width: 314px; }
.col-color { width: 227px; }
.th-on { background: linear-gradient(180deg, #fad690 0, #fad690 55%, #f5c46c 55%, #f5c46c 100%); }
.col-color { background: linear-gradient(180deg, #fcfcfc 0, #fcfcfc 65%, #c8daf1 65%, #c8daf1 100%); }
.th-caret { position: absolute; right: 6px; top: 9px; width: 0; height: 0; border: 3px solid transparent; border-top: 3px solid #222; border-bottom: 0; }
.sel { padding: 0 !important; background: #fcfcfc; }
.sel-on { background: #fad28c; }
.star { text-align: center; font-size: 10px; color: #111; font-family: "DejaVu Sans", sans-serif; font-weight: normal; }
.cell-on { box-shadow: inset 0 0 0 2px #f8bd68; }
.picked { background: #000; color: #fff; display: inline-block; line-height: 18px; font-size: 13.5px; }

/* record navigator */
.recnav {
    margin-top: auto; height: 20px; flex: none; display: flex; align-items: center; position: relative;
    border: 1px solid #6c9acd; width: 565px;
    background: linear-gradient(180deg, #fcfcfc 0, #fcfcfc 45%, #d2e2f4 45%, #d2e2f4 100%);
    color: #15428b;
}
.rec-label { margin-left: 4px; width: 45px; }
.rec-btn { position: relative; width: 8px; height: 8px; flex: none; }
.rec-btn::after { content: ""; position: absolute; left: 1px; top: 0; width: 0; height: 0; border: 4px solid transparent; border-left: 5px solid #15428b; border-right: 0; }
.rb-first::after, .rb-prev::after { border-left: 0; border-right: 5px solid #15428b; left: 2px; }
.rb-first::before { content: ""; position: absolute; left: 0; top: 0; width: 1px; height: 8px; background: #15428b; }
.rb-prev { margin-left: 9px; }
.rb-prev::after { border-right-color: #a9bcd4; }
.rb-next { margin-left: 8px; }
.rb-last { margin-left: 9px; }
.rb-last::before { content: ""; position: absolute; left: 7px; top: 0; width: 1px; height: 8px; background: #15428b; }
.rb-new { margin-left: 7px; }
.rb-new::before { content: ""; position: absolute; left: 6px; top: 1px; width: 6px; height: 6px; background: #f2b93c; }
.rec-input { width: 50px; height: 16px; background: #fff; border: 1px solid #b9cfe8; margin-left: 3px; padding-left: 1px; line-height: 14px; color: #111; }
.rec-sep { width: 1px; height: 18px; background: #6c9acd; }
.rec-sep-a { margin-left: 10px; }
.rec-funnel { margin-left: 9px; }
.rec-nofilter { margin-left: 2px; width: 53px; color: #a4a8ad; }
.rec-search { width: 71px; height: 16px; background: #fff; border: 1px solid #b9cfe8; margin-left: 3px; padding-left: 2px; line-height: 14px; color: #111; }

/* scrollbar */
.scrollbar { width: 15px; margin-right: 1px; flex: none; display: flex; flex-direction: column; align-items: center; padding-top: 6px; }
.arrow-up { width: 0; height: 0; border: 4.5px solid transparent; border-bottom: 5px solid #4b5a78; border-top: 0; }
.arrow-down { width: 0; height: 0; border: 4.5px solid transparent; border-top: 5px solid #4b5a78; border-bottom: 0; margin-top: 17px; }
.thumb { width: 15px; height: 695px; margin-top: 7px; flex: none; border: 1px solid #9eb1c8; border-radius: 2px; display: flex; align-items: center; justify-content: center; background: linear-gradient(90deg, #fff 0, #e9eff6 40%, #ccd7e4 50%, #e3e9f1 100%); }
.grip { width: 7px; height: 7px; background: repeating-linear-gradient(180deg, #7f90a6 0, #7f90a6 1px, transparent 1px, transparent 2px); }

/* status bar */
.status {
    height: 22px; flex: none; display: flex; align-items: center; position: relative;
    border-top: 1px solid #6f97c8;
    background: linear-gradient(180deg, #d6e5f6 0, #d6e5f6 4px, #c6daf2 4px, #c6daf2 7px, #b7d4f8 7px, #b7d4f8 13px, #c6daf2 13px, #c6daf2 18px, #d6e5f6 18px);
    color: #15428b;
}
.status-left { width: 741px; padding-left: 8px; height: 100%; line-height: 20px; border-right: 1px solid #a8c3e3; }
.status-keys { flex: 1; display: flex; justify-content: flex-end; gap: 16px; padding-right: 7px; font-size: 10.8px; height: 100%; line-height: 20px; border-right: 1px solid #a8c3e3; }
.viewbtns { display: flex; width: 110px; height: 19px; margin: 0 5px 0 7px; border: 1px solid #8fb0d8; border-radius: 2px; background: linear-gradient(180deg, #d3e2f5 0, #bcd2ee 100%); }
.vbtn { flex: 1; display: flex; align-items: center; justify-content: center; border-right: 1px solid #a8c3e3; }
.vbtn:last-child { border-right: 0; }
.vbtn-on { background: linear-gradient(180deg, #fde3a8, #f8bd5f); }
.sizegrip { width: 10px; height: 10px; margin-top: 8px; margin-right: 1px; background: radial-gradient(circle, #6f8db5 1px, transparent 1.2px) 0 0/3px 3px; clip-path: polygon(100% 0, 100% 100%, 0 100%); }
```
